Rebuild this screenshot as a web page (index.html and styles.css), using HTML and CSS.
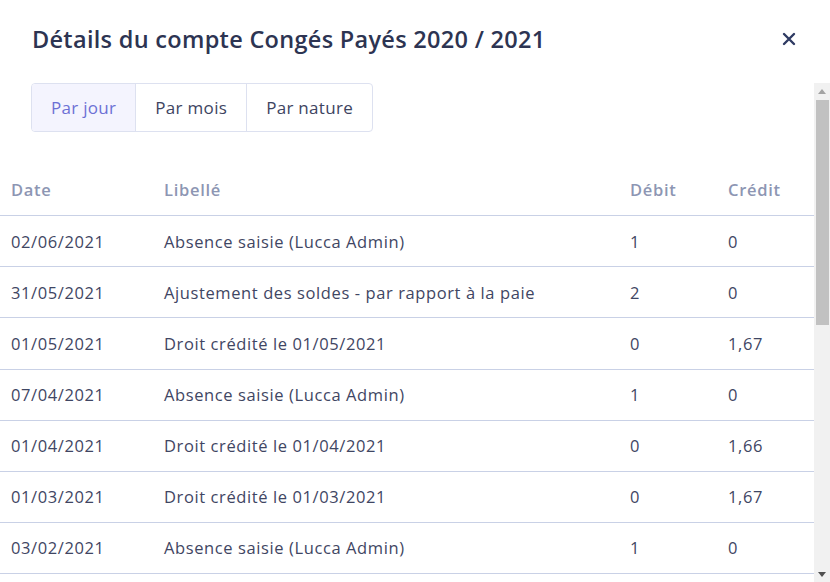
FILE: index.html
```html
<!DOCTYPE html>
<html lang="fr">
<head>
<meta charset="utf-8">
<title>Détails du compte</title>
<link rel="stylesheet" href="styles.css">
</head>
<body>
<div class="modal">
  <div class="modal-header">
    <h1 class="modal-title">Détails du compte Congés Payés 2020 / 2021</h1>
    <button class="close-btn" aria-label="Fermer">
      <svg width="14" height="14" viewBox="0 0 14 14"><path d="M2 2 L12 12 M12 2 L2 12" stroke="#2f3b63" stroke-width="2.4" stroke-linecap="round"/></svg>
    </button>
  </div>
  <div class="modal-body">
    <div class="scroll-content">
      <div class="tabs">
        <div class="tab active">Par jour</div>
        <div class="tab">Par mois</div>
        <div class="tab">Par nature</div>
      </div>
      <div class="table">
        <div class="row head">
          <div class="cell">Date</div><div class="cell">Libellé</div><div class="cell">Débit</div><div class="cell">Crédit</div>
        </div>
        <div class="row"><div class="cell">02/06/2021</div><div class="cell">Absence saisie (Lucca Admin)</div><div class="cell">1</div><div class="cell">0</div></div>
        <div class="row"><div class="cell">31/05/2021</div><div class="cell">Ajustement des soldes - par rapport à la paie</div><div class="cell">2</div><div class="cell">0</div></div>
        <div class="row"><div class="cell">01/05/2021</div><div class="cell">Droit crédité le 01/05/2021</div><div class="cell">0</div><div class="cell">1,67</div></div>
        <div class="row"><div class="cell">07/04/2021</div><div class="cell">Absence saisie (Lucca Admin)</div><div class="cell">1</div><div class="cell">0</div></div>
        <div class="row"><div class="cell">01/04/2021</div><div class="cell">Droit crédité le 01/04/2021</div><div class="cell">0</div><div class="cell">1,66</div></div>
        <div class="row"><div class="cell">01/03/2021</div><div class="cell">Droit crédité le 01/03/2021</div><div class="cell">0</div><div class="cell">1,67</div></div>
        <div class="row"><div class="cell">03/02/2021</div><div class="cell">Absence saisie (Lucca Admin)</div><div class="cell">1</div><div class="cell">0</div></div>
        <div class="row"><div class="cell">01/02/2021</div><div class="cell">Droit crédité le 01/02/2021</div><div class="cell">0</div><div class="cell">1,67</div></div>
      </div>
    </div>
    <div class="scrollbar" aria-hidden="true">
      <div class="sb-btn">
        <svg width="8" height="5" viewBox="0 0 8 5"><path d="M0 5 L4 0 L8 5 Z" fill="#a3a3a3"/></svg>
      </div>
      <div class="sb-thumb"></div>
      <div class="sb-space"></div>
      <div class="sb-btn">
        <svg width="8" height="5" viewBox="0 0 8 5"><path d="M0 0 L8 0 L4 5 Z" fill="#505050"/></svg>
      </div>
    </div>
  </div>
</div>
</body>
</html>
```
FILE: styles.css
```css
html, body {
  margin: 0;
  padding: 0;
  background: #ffffff;
}
body {
  font-family: "Open Sans", Roboto, "Liberation Sans", sans-serif;
  color: #3f4663;
}
.modal {
  height: 582px;
  display: flex;
  flex-direction: column;
  overflow: hidden;
}
.modal-header {
  height: 83px;
  flex: none;
  display: flex;
  align-items: center;
  justify-content: space-between;
  padding: 0 30px 6px 32px;
  box-sizing: border-box;
}
.modal-title {
  margin: 0;
  font-size: 23.5px;
  font-weight: 600;
  color: #2d3452;
  letter-spacing: 0.3px;
}
.close-btn {
  border: 0;
  background: transparent;
  padding: 4px;
  display: flex;
  cursor: pointer;
}
.modal-body {
  flex: 1;
  min-height: 0;
  display: flex;
}
.scroll-content {
  flex: 1;
  min-width: 0;
  overflow: hidden;
}
.scrollbar {
  width: 16px;
  flex: none;
  background: #f1f1f1;
  display: flex;
  flex-direction: column;
}
.sb-btn {
  height: 16px;
  flex: none;
  display: flex;
  align-items: center;
  justify-content: center;
}
.sb-thumb {
  height: 225px;
  margin: 1px 1px 0 2px;
  background: #c1c1c1;
  flex: none;
}
.sb-space {
  flex: 1;
}
.tabs {
  display: inline-flex;
  margin-left: 31px;
  height: 49px;
  border: 1px solid #dde1f0;
  border-radius: 4px;
  box-sizing: border-box;
  overflow: hidden;
}
.tab {
  display: flex;
  align-items: center;
  padding: 0 19px;
  font-size: 17px;
  letter-spacing: 0.3px;
  color: #3d4461;
  border-left: 1px solid #dde1f0;
}
.tab:first-child {
  border-left: 0;
}
.tab.active {
  background: #f4f4fe;
  color: #6c70d5;
}
.table {
  margin-top: 33px;
}
.row {
  display: grid;
  grid-template-columns: 153px 466px 98px 1fr;
  height: 51.14px;
  box-sizing: border-box;
  border-bottom: 1px solid #c9d1e6;
  align-items: center;
  font-size: 16.5px;
  letter-spacing: 0.6px;
}
.cell {
  padding-left: 11px;
  white-space: nowrap;
}
.row.head {
  color: #8d96b3;
  font-weight: 600;
  letter-spacing: 0.7px;
  padding-bottom: 2px;
}
```
